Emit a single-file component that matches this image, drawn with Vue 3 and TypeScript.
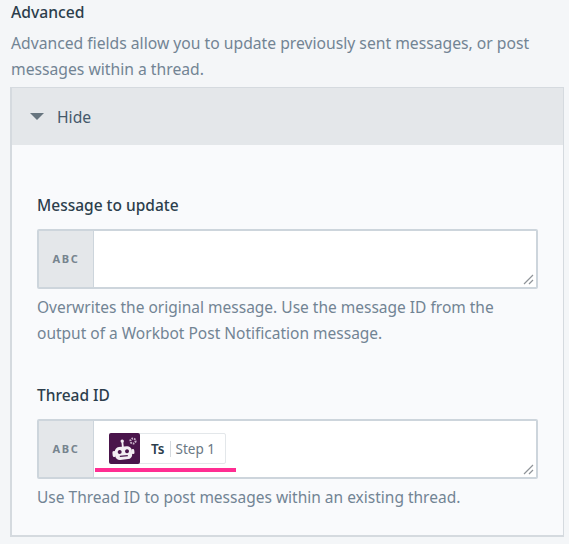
<script setup lang="ts">
interface Field { label: string; hint: string; pill: boolean }
const fields: Field[] = [
  { label: 'Message to update', hint: 'Overwrites the original message. Use the message ID from the output of a Workbot Post Notification message.', pill: false },
  { label: 'Thread ID', hint: 'Use Thread ID to post messages within an existing thread.', pill: true },
]
</script>

<template>
  <div class="page">
    <h2 class="title">Advanced</h2>
    <p class="desc">Advanced fields allow you to update previously sent messages, or post messages within a thread.</p>
    <section class="panel">
      <header class="head"><span class="caret"></span><span>Hide</span></header>
      <div class="body">
        <div v-for="f in fields" :key="f.label" class="field">
          <label class="label">{{ f.label }}</label>
          <div class="input">
            <div class="abc">ABC</div>
            <div class="area">
              <div v-if="f.pill" class="pill-wrap">
                <span class="pill">
                  <span class="logo">
                    <svg width="31" height="31" viewBox="0 0 31 31">
                      <g transform="rotate(-6 15 20)">
                        <rect x="6" y="13.5" width="17" height="13" rx="4.5" fill="#f3eef3" />
                        <rect x="3.5" y="17" width="3.2" height="6" rx="1.5" fill="#f3eef3" />
                        <rect x="22.5" y="17" width="3" height="5" rx="1.5" fill="#f3eef3" />
                        <rect x="13.6" y="9" width="1.8" height="5" fill="#f3eef3" />
                        <circle cx="14.5" cy="8" r="1.7" fill="#f3eef3" />
                        <circle cx="10.8" cy="18.5" r="2" fill="#4a154b" />
                        <circle cx="18.2" cy="18.5" r="2" fill="#4a154b" />
                        <path d="M10.5 23h8" stroke="#4a154b" stroke-width="1.3" />
                      </g>
                      <circle cx="24" cy="8" r="2.6" fill="none" stroke="#c9b4ca" stroke-width="2" stroke-dasharray="1.6 1" />
                    </svg>
                  </span>
                  <span class="pill-key">Ts</span>
                  <span class="pill-step">Step 1</span>
                </span>
                <span class="underline"></span>
              </div>
              <svg class="grip" width="11" height="11" viewBox="0 0 11 11">
                <path d="M1 10 10 1M6 10l4-4" stroke="#8f9499" stroke-width="1.2" fill="none" />
              </svg>
            </div>
          </div>
          <p class="hint">{{ f.hint }}</p>
        </div>
      </div>
    </section>
  </div>
</template>

<style>
html, body { margin: 0; background: #f4f6f8; }
</style>

<style scoped>
.page {
  width: 569px;
  height: 544px;
  box-sizing: border-box;
  padding: 1px 5px 0 10px;
  overflow: hidden;
  background: #f4f6f8;
  font-family: "Noto Sans", sans-serif;
  font-size: 15.7px;
  color: #728494;
}
.title {
  margin: 0 0 0 1px;
  font-size: 15.7px;
  line-height: 22px;
  font-weight: 500;
  color: #2c3e4c;
}
.desc {
  margin: 7px 0 5px 1px;
  line-height: 26px;
  width: 530px;
}
.panel {
  border: 1px solid #d5dadf;
  border-left-width: 2px;
  border-bottom-width: 2px;
  background: #f9fafc;
  height: 450px;
  box-sizing: border-box;
}
.head {
  height: 57px;
  display: flex;
  align-items: center;
  gap: 13px;
  padding-left: 18px;
  background: #e4e7ea;
  color: #45596a;
}
.caret {
  width: 0;
  height: 0;
  border-left: 7px solid transparent;
  border-right: 7px solid transparent;
  border-top: 7px solid #67757f;
}
.body {
  padding: 48px 25px 0 25px;
}
.field + .field { margin-top: 37px; }
.label {
  display: block;
  font-size: 15.5px;
  font-weight: 500;
  line-height: 24px;
  color: #2c3e4c;
}
.input {
  display: flex;
  box-sizing: border-box;
  height: 60px;
  margin-top: 12px;
  border: 2px solid #cdd5dc;
  border-radius: 2px;
  background: #fff;
}
.abc {
  width: 55px;
  flex: none;
  display: flex;
  align-items: center;
  justify-content: center;
  padding-bottom: 1px;
  box-sizing: border-box;
  background: #e4e7ea;
  border-right: 1px solid #cdd5dc;
  font-size: 11px;
  font-weight: 700;
  letter-spacing: 1.7px;
  color: #76848f;
}
.area {
  flex: 1;
  position: relative;
  padding: 12px 0 0 1px;
}
.pill-wrap { width: 141px; }
.pill {
  display: flex;
  align-items: center;
  box-sizing: border-box;
  width: 117px;
  height: 31px;
  margin-left: 14px;
  background: #fff;
  border: 1px solid #e3e7ea;
  border-radius: 2px;
  font-size: 13.5px;
}
.logo {
  flex: none;
  width: 31px;
  height: 31px;
  margin: -1px 0 -1px -1px;
  background: #4a154b;
  border-radius: 2px;
  display: block;
}
.logo svg { display: block; }
.pill-key {
  margin-left: 11px;
  padding-right: 5px;
  border-right: 1px solid #d5dadf;
  line-height: 16px;
  font-weight: 600;
  color: #2c3e4c;
}
.pill-step {
  padding-left: 5px;
  color: #6a7884;
}
.underline {
  display: block;
  width: 141px;
  height: 4px;
  margin-top: 4px;
  background: #ff2d92;
}
.grip {
  position: absolute;
  right: 2px;
  bottom: 2px;
}
.hint {
  margin: 5px 0 0;
  font-size: 15.5px;
  line-height: 26px;
}
</style>
